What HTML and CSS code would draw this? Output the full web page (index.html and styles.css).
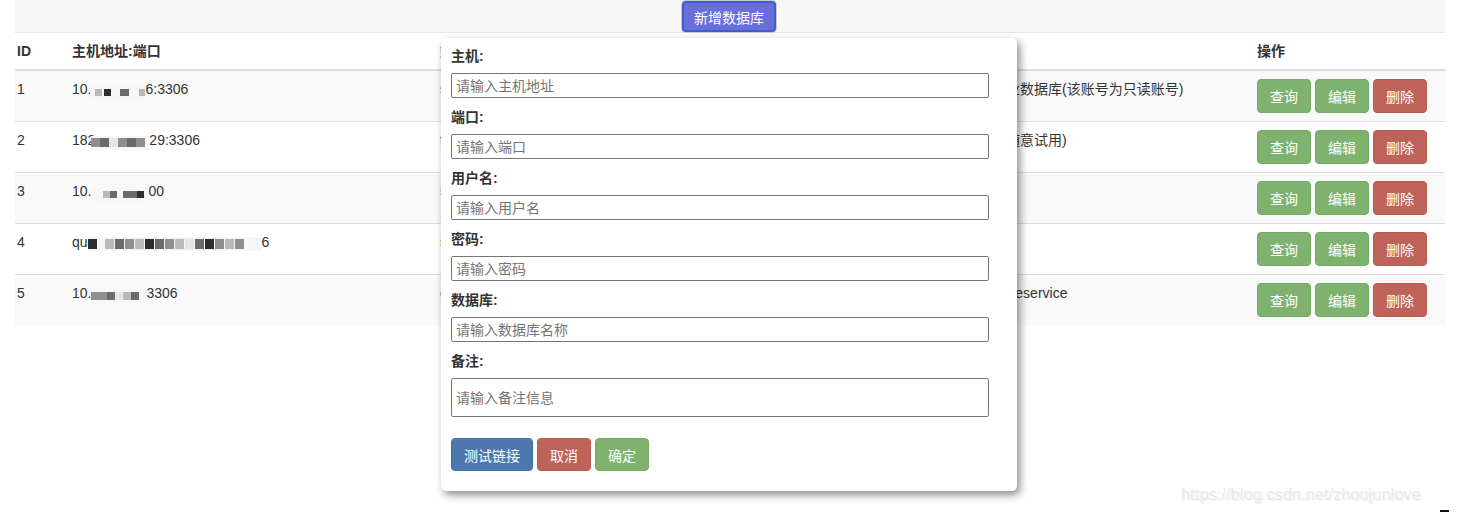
FILE: index.html
```html
<!DOCTYPE html>
<html lang="zh-CN">
<head>
<meta charset="utf-8">
<title>数据库管理</title>
<link rel="stylesheet" href="styles.css">
</head>
<body>
<div class="page">
  <div class="toolbar">
    <button class="btn-add">新增数据库</button>
  </div>
  <table class="db-table">
    <colgroup>
      <col class="c-id"><col class="c-host"><col class="c-name"><col class="c-note"><col class="c-ops">
    </colgroup>
    <thead>
      <tr><th>ID</th><th>主机地址:端口</th><th>数据库</th><th>备注</th><th>操作</th></tr>
    </thead>
    <tbody>
      <tr>
        <td>1</td>
        <td>10.<span class="mosaic m1"><i class="g1"></i><i class="g4"></i><i class="sp"></i><i class="g3 w"></i><i class="sp"></i><i class="g1"></i></span>6:3306</td>
        <td>saas_order</td>
        <td>用于查询线上测试环境企业数据库(该账号为只读账号)</td>
        <td><div class="ops"><button class="b-green">查询</button><button class="b-green">编辑</button><button class="b-red">删除</button></div></td>
      </tr>
      <tr>
        <td>2</td>
        <td>182<span class="mosaic m2"><i class="g2"></i><i class="g3"></i><i class="g0"></i><i class="g2"></i><i class="g3"></i><i class="g2"></i></span>29:3306</td>
        <td>test_user</td>
        <td>测试数据库仅供开发人员随意试用)</td>
        <td><div class="ops"><button class="b-green">查询</button><button class="b-green">编辑</button><button class="b-red">删除</button></div></td>
      </tr>
      <tr>
        <td>3</td>
        <td>10.<span class="mosaic m3"><i class="sp"></i><i class="g1"></i><i class="g3"></i><i class="sp"></i><i class="g3"></i><i class="g3"></i><i class="g4"></i></span>00</td>
        <td>saas_pay</td>
        <td>测试库</td>
        <td><div class="ops"><button class="b-green">查询</button><button class="b-green">编辑</button><button class="b-red">删除</button></div></td>
      </tr>
      <tr>
        <td>4</td>
        <td>qu<span class="mosaic m4"><i class="g4"></i><i class="sp"></i><i class="g1"></i><i class="g3"></i><i class="g2"></i><i class="g1"></i><i class="g4"></i><i class="g3"></i><i class="g2"></i><i class="g1"></i><i class="g0"></i><i class="g3"></i><i class="g4"></i><i class="g2"></i><i class="g1"></i><i class="g2"></i></span>6</td>
        <td>saas_msg</td>
        <td>测试库</td>
        <td><div class="ops"><button class="b-green">查询</button><button class="b-green">编辑</button><button class="b-red">删除</button></div></td>
      </tr>
      <tr>
        <td>5</td>
        <td>10.<span class="mosaic m5"><i class="g2"></i><i class="g2"></i><i class="g3"></i><i class="g0"></i><i class="g1"></i><i class="g3"></i></span>3306</td>
        <td>core_db</td>
        <td>测试环境的用户中心库 coreservice</td>
        <td><div class="ops"><button class="b-green">查询</button><button class="b-green">编辑</button><button class="b-red">删除</button></div></td>
      </tr>
    </tbody>
  </table>

  <div class="modal">
    <form class="modal-form">
      <div class="field"><label>主机:</label><input type="text" placeholder="请输入主机地址"></div>
      <div class="field"><label>端口:</label><input type="text" placeholder="请输入端口"></div>
      <div class="field"><label>用户名:</label><input type="text" placeholder="请输入用户名"></div>
      <div class="field"><label>密码:</label><input type="text" placeholder="请输入密码"></div>
      <div class="field"><label>数据库:</label><input type="text" placeholder="请输入数据库名称"></div>
      <div class="field"><label>备注:</label><textarea placeholder="请输入备注信息"></textarea></div>
      <div class="modal-actions">
        <button type="button" class="b-blue">测试链接</button>
        <button type="button" class="b-red">取消</button>
        <button type="button" class="b-green">确定</button>
      </div>
    </form>
  </div>

  <div class="watermark">https://blog.csdn.net/zhoujunlove</div>
  <div class="corner-mark"></div>
</div>
</body>
</html>
```

FILE: styles.css
```css
html, body {
  margin: 0;
  padding: 0;
  background: #fff;
}
body {
  font-family: "Liberation Sans", "Noto Sans CJK SC", sans-serif;
  font-size: 14px;
  color: #333;
  width: 1457px;
  height: 514px;
  overflow: hidden;
}
.page {
  position: relative;
  padding: 0 12px 0 15px;
  height: 514px;
  box-sizing: border-box;
}
.toolbar {
  background: #f7f7f7;
  border-bottom: 1px solid #e6e6e6;
  display: flex;
  justify-content: center;
  align-items: flex-start;
  padding-top: 1px;
  height: 31px;
}
.btn-add {
  font-family: inherit;
  font-size: 14px;
  color: #fff;
  background: #6a6edb;
  border: 2px solid #3e5fc9;
  box-shadow: 0 0 0 1px #c9c9d6;
  border-radius: 4px;
  width: 94px;
  height: 31px;
  padding: 0;
  margin-left: -2px;
}
.db-table {
  width: 1430px;
  border-collapse: collapse;
  table-layout: fixed;
}
.c-id { width: 55px; }
.c-host { width: 368px; }
.c-name { width: 412px; }
.c-note { width: 405px; }
.c-ops { width: 190px; }
.db-table th, .db-table td {
  padding: 8px 2px;
  line-height: 20px;
  text-align: left;
  vertical-align: top;
  white-space: nowrap;
  overflow: hidden;
}
.db-table th {
  font-weight: bold;
  border-bottom: 2px solid #ddd;
}
.db-table td {
  border-top: 1px solid #ddd;
}
.db-table tbody tr:nth-child(odd) {
  background: #f9f9f9;
}
.ops {
  display: flex;
  gap: 4px;
  height: 34px;
}
.ops button {
  width: 54px;
}
button {
  font-family: inherit;
  font-size: 14px;
  color: #fff;
  height: 34px;
  border-radius: 4px;
  padding: 0;
  cursor: pointer;
}
.b-green { background: #7fb26f; border: 1px solid #76ab66; }
.b-red { background: #bf635a; border: 1px solid #b95a51; }
.b-blue { background: #4d78af; border: 1px solid #466fa5; }

.mosaic {
  display: inline-flex;
  align-items: center;
  box-sizing: border-box;
  height: 14px;
  vertical-align: -2px;
  background: #f6f6f6;
}
.mosaic i {
  display: block;
  width: 7px;
  height: 7px;
}
.mosaic i.w { width: 10px; }
.mosaic i.sp { background: transparent; width: 6px; }
.g0 { background: #e4e4e4; }
.g1 { background: #b9b9b9; }
.g2 { background: #8e8e8e; }
.g3 { background: #6b6b6b; }
.g4 { background: #2d2d2d; }
.m1 { width: 55px; padding-left: 5px; gap: 2px; margin-left: -1px; }
.m2 { width: 58px; margin-left: -4px; }
.m3 { width: 57px; padding-left: 6px; }
.m4 { width: 174px; gap: 1px; }
.m5 { width: 55px; }
.m2 i { width: 9px; height: 9px; }
.m4 i { width: 9px; height: 10px; }
.m5 i { width: 8px; height: 8px; }

.modal {
  position: absolute;
  left: 441px;
  top: 38px;
  width: 576px;
  height: 453px;
  background: #fff;
  border-radius: 5px;
  box-shadow: 3px 4px 8px rgba(0, 0, 0, 0.45);
  box-sizing: border-box;
  padding: 8px 28px 20px 10px;
}
.modal-form {
  display: flex;
  flex-direction: column;
}
.field {
  display: flex;
  flex-direction: column;
  margin-bottom: 9px;
}
.field label {
  font-weight: bold;
  line-height: 20px;
  margin-bottom: 7px;
}
.field input, .field textarea {
  font-family: inherit;
  font-size: 14px;
  color: #333;
  width: 538px;
  height: 25px;
  box-sizing: border-box;
  border: 1px solid #767676;
  border-radius: 2px;
  padding: 0 4px;
  margin: 0;
}
.field textarea {
  height: 39px;
  padding: 9px 4px 0;
  resize: none;
  line-height: 20px;
}
.field input::placeholder, .field textarea::placeholder {
  color: #757575;
}
.modal-actions {
  display: flex;
  gap: 4px;
  margin-top: 12px;
}
.modal-actions button { width: 54px; height: 33px; }
.modal-actions .b-blue { width: 82px; }

.watermark {
  position: absolute;
  left: 1181px;
  top: 486px;
  font-size: 16px;
  color: rgba(205, 205, 205, 0.45);
  text-shadow: 2px 1px 0 rgba(220, 220, 220, 0.35);
  letter-spacing: 0.2px;
}
.corner-mark {
  position: absolute;
  left: 1440px;
  top: 510px;
  width: 9px;
  height: 2px;
  background: #111;
}
```
